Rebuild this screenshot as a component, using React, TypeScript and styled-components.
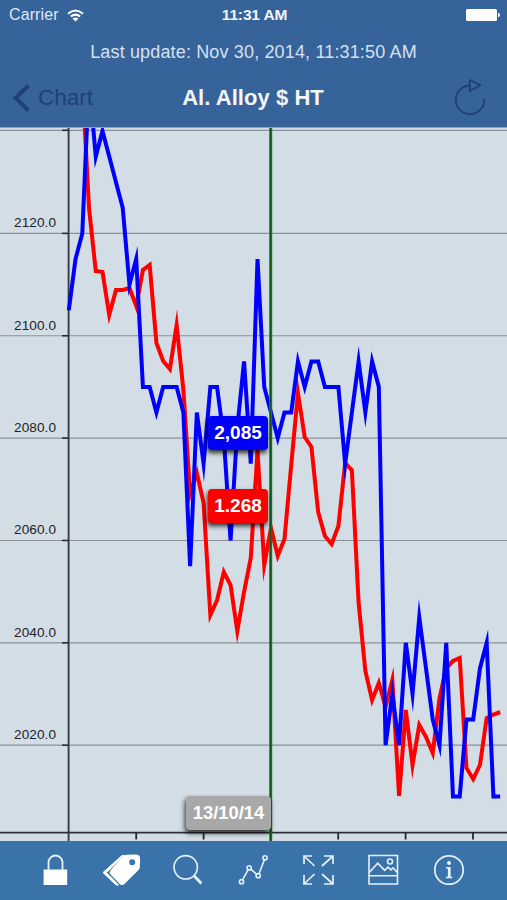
import React from "react";
import styled, { createGlobalStyle } from "styled-components";

const GlobalStyle = createGlobalStyle`
  *, *::before, *::after { box-sizing: border-box; }
  body {
    margin: 0;
    background: #d3dde6;
    font-family: "Liberation Sans", Arial, sans-serif;
  }
`;

const Screen = styled.main`
  display: flex;
  flex-direction: column;
  width: 507px;
  height: 900px;
  overflow: hidden;
`;

const Header = styled.header`
  flex: none;
  height: 128px;
  background: #37639b;
  border-bottom: 1px solid #8ca3bb;
  color: #f2f6fc;
`;

const StatusBar = styled.div`
  display: grid;
  grid-template-columns: 1fr auto 1fr;
  align-items: center;
  height: 30px;
  padding: 0 7px 0 9px;
`;

const Carrier = styled.div`
  display: flex;
  align-items: center;
  gap: 8px;
  font-size: 16px;
  letter-spacing: 0.1px;
  color: #dfe8f5;
`;

const Clock = styled.div`
  font-size: 15.5px;
  font-weight: bold;
  letter-spacing: -0.15px;
`;

const Battery = styled.svg`
  justify-self: end;
  display: block;
`;

const UpdateLine = styled.div`
  height: 44px;
  line-height: 45px;
  text-align: center;
  font-size: 18px;
  letter-spacing: 0.15px;
  color: #d5e1f1;
`;

const NavBar = styled.nav`
  display: grid;
  grid-template-columns: 1fr auto 1fr;
  align-items: center;
  height: 48px;
  padding: 0 21px 0 12px;
`;

const NavButton = styled.button<{ $end?: boolean }>`
  display: flex;
  align-items: center;
  gap: 8px;
  justify-self: ${(p) => (p.$end ? "end" : "start")};
  padding: 0;
  border: 0;
  background: none;
  color: #1f3f7d;
  font: 22.5px "Liberation Sans", Arial, sans-serif;
`;

const RefreshGlyph = styled.svg`
  display: block;
  margin-bottom: 3px;
`;

const Title = styled.h1`
  margin: 0;
  padding-left: 8px;
  font-size: 22px;
  letter-spacing: 0.05px;
  font-weight: bold;
`;

const ChartArea = styled.section`
  position: relative;
  flex: 1;
  overflow: hidden;
  background: #d3dde6;
`;

const Plot = styled.svg`
  display: block;
`;

const AxisLabel = styled.text`
  font: 13.6px "Liberation Sans", Arial, sans-serif;
  fill: #1d2228;
`;

const Badge = styled.div<{ $top: number; $color: string; $wide?: boolean }>`
  position: absolute;
  top: ${(p) => p.$top}px;
  right: ${(p) => (p.$wide ? 236 : 239)}px;
  display: flex;
  align-items: center;
  justify-content: center;
  width: ${(p) => (p.$wide ? 85 : 60)}px;
  height: 34px;
  border-radius: 4px;
  background: ${(p) => p.$color};
  box-shadow: -1px 3px 5px rgba(0, 0, 0, 0.8);
  color: #fff;
  font-size: ${(p) => (p.$wide ? 18.4 : 19)}px;
  font-weight: bold;
`;

const Toolbar = styled.footer`
  flex: none;
  display: grid;
  grid-template-columns: repeat(7, 65.6px);
  justify-content: center;
  align-items: center;
  height: 59px;
  padding: 0 3px 1px 0;
  background: #3a73aa;
`;

const Tool = styled.button`
  display: grid;
  place-items: center;
  padding: 0;
  border: 0;
  background: none;
  color: #e6f1fc;
`;

const CHART_TOP = 128;
const CHART_HEIGHT = 713;
const START_X = 68.8;
const STEP_X = 6.74;
const priceToY = (price: number) => 233.4 + (2120 - price) * 5.118;

const prices = [
  2105, 2115, 2120, 2150, 2135, 2140, 2135, 2130, 2125, 2110, 2115, 2090, 2090,
  2085, 2090, 2090, 2090, 2085, 2055, 2085, 2075, 2090, 2090, 2080, 2060, 2082,
  2095, 2075, 2115, 2090, 2085, 2080, 2085, 2085, 2095, 2090, 2095, 2095, 2090,
  2090, 2090, 2075, 2085, 2095, 2085, 2095, 2090, 2020, 2030, 2020, 2040, 2030,
  2045, 2035, 2025, 2020, 2040, 2010, 2010, 2025, 2025, 2035, 2040, 2010, 2010,
];

const rates = [
  20, 40, 80, 208, 271, 272, 315, 290, 290, 288, 306, 270, 265, 343, 361, 369,
  325, 390, 494, 473, 503, 615, 600, 572, 585, 631, 592, 558, 450, 565, 528,
  556, 539, 465, 393, 437, 447, 512, 536, 544, 526, 463, 470, 603, 671, 700,
  683, 707, 680, 796, 710, 765, 725, 737, 753, 698, 668, 661, 658, 768, 779,
  765, 718, 714.5, 712,
];

const toPoints = (ys: number[]) =>
  ys.map((y, i) => `${(START_X + i * STEP_X).toFixed(2)},${y.toFixed(1)}`).join(" ");

const gridPrices = [2140, 2120, 2100, 2080, 2060, 2040, 2020];
const dateTicks = [136.2, 203.6, 338.2, 405.6, 473];

function PriceChart() {
  return (
    <ChartArea>
      <Plot width="507" height={CHART_HEIGHT} viewBox={`0 ${CHART_TOP} 507 ${CHART_HEIGHT}`}>
        {gridPrices.map((price, i) => {
          const y = i === 0 ? 130.3 : priceToY(price);
          return (
            <g key={price}>
              <line x1="0" x2="507" y1={y} y2={y} stroke="#8b9299" strokeWidth="1.2" />
              <line x1="62" x2="69" y1={y} y2={y} stroke="#20272e" strokeWidth="1.5" />
              {i > 0 && (
                <AxisLabel x="14" y={y - 6.2} textLength="42">
                  {price.toFixed(1)}
                </AxisLabel>
              )}
            </g>
          );
        })}
        <path d="M68.6 128V841" stroke="#343c44" strokeWidth="1.9" />
        <path d="M0 832.6H507" stroke="#2a3036" strokeWidth="1.8" />
        {dateTicks.map((x) => (
          <path key={x} d={`M${x} 832V839.5`} stroke="#20272e" strokeWidth="1.8" />
        ))}
        <g fill="none" strokeWidth="4" strokeMiterlimit="10">
          <polyline points={toPoints(rates)} stroke="#ff0000" />
          <polyline points={toPoints(prices.map(priceToY))} stroke="#0000ff" />
        </g>
        <path d="M270.7 128V841" stroke="#1a7d22" strokeWidth="3" />
        <path d="M270.7 128V841" stroke="#0b4f14" strokeWidth="1" />
      </Plot>
      <Badge $top={288} $color="#0000fa">2,085</Badge>
      <Badge $top={361} $color="#fc0000">1.268</Badge>
      <Badge $top={668} $color="#a8a8a8" $wide>13/10/14</Badge>
    </ChartArea>
  );
}

const LockIcon = () => (
  <svg width="32" height="34" viewBox="0 0 32 34" fill="none">
    <path d="M9.5 17V9.5a7 7 0 0 1 14 0V17" stroke="currentColor" strokeWidth="1.8" />
    <path d="M4.6 16.5h23.6V32H4.6z" fill="#fff" />
  </svg>
);

const TagsIcon = () => (
  <svg width="40" height="34" viewBox="0 0 40 34">
    <path d="M21 2.5h2.2L5.3 19.6 17.5 32h-2.4L2 19.6z" fill="#fff" stroke="#fff" strokeWidth="1" strokeLinejoin="round" />
    <path
      fillRule="evenodd"
      d="M25.5 1.8 35 1.6q3.9 0 4.1 3.7l-.3 8.6q0 2-1.5 3.4L23.1 31.2q-2 1.8-4 0l-9.8-10q-1.8-2 0-3.8L22 3.4q1.4-1.5 3.5-1.6zM31.2 6.2a3 3 0 1 0 0 6 3 3 0 1 0 0-6z"
      fill="#fff"
    />
  </svg>
);

const SearchIcon = () => (
  <svg width="32" height="34" viewBox="-2 0 32 34" fill="none" stroke="currentColor">
    <circle cx="13.7" cy="14.3" r="11.7" strokeWidth="1.6" />
    <path d="m22.2 23 7.2 7.5" strokeWidth="2.8" />
  </svg>
);

const LineChartIcon = () => (
  <svg width="32" height="34" viewBox="-2 0 32 34" fill="none" stroke="currentColor" strokeWidth="1.6">
    <circle cx="3.5" cy="28.7" r="2.1" />
    <circle cx="11.2" cy="14.8" r="2.1" />
    <circle cx="20.2" cy="22.7" r="2.1" />
    <circle cx="27" cy="4.8" r="2.1" />
    <path d="m4.5 26.8 5.7-10.1m2.6-.5 5.8 5.1m2.4-.6 5.4-13.9" />
  </svg>
);

const ExpandIcon = () => (
  <svg width="32" height="34" viewBox="0 0 32 34" fill="none" stroke="currentColor" strokeWidth="1.7">
    <path d="M2 11V3h8M2 3l10.5 10M22 3h9v8M31 3 20 13M2 22v9h8M2 31l10.5-10M31 22v9h-9m9 0L20 21" />
  </svg>
);

const PictureIcon = () => (
  <svg width="32" height="34" viewBox="0 0 32 34" fill="none" stroke="currentColor" strokeWidth="1.6">
    <path d="M2 2.5h28.5V31H2zM2 22.8h28.5M2.5 19.2l8.2-9 7 7.2 3.3-3.2 3 2.6 2-2 4 4.5" />
    <circle cx="23" cy="8.5" r="2.5" />
  </svg>
);

const InfoIcon = () => (
  <svg width="32" height="34" viewBox="0 0 32 34" fill="none" stroke="currentColor">
    <circle cx="16" cy="17" r="14.2" strokeWidth="1.7" />
    <circle cx="16" cy="10" r="2" fill="currentColor" stroke="none" />
    <path d="M13 14.7h3.5v9.7M13 24.4h6.3" strokeWidth="1.5" />
    <path d="M16.2 14.5v10" strokeWidth="2.6" />
  </svg>
);

const tools = [
  { name: "Lock", Icon: LockIcon },
  { name: "Tags", Icon: TagsIcon },
  { name: "Search", Icon: SearchIcon },
  { name: "Series", Icon: LineChartIcon },
  { name: "Full screen", Icon: ExpandIcon },
  { name: "Picture", Icon: PictureIcon },
  { name: "Info", Icon: InfoIcon },
];

export default function App() {
  return (
    <Screen>
      <GlobalStyle />
      <Header>
        <StatusBar>
          <Carrier>
            Carrier
            <svg width="17" height="13" viewBox="0 0 17 13" fill="none" stroke="#fff" strokeWidth="2">
              <path d="M1 4.7q7.5-6.5 15 0M3.8 7.6q4.7-4 9.4 0" />
              <path d="m5.5 9.6 3 3 3-3q-3-2.4-6 0z" fill="#fff" stroke="none" />
            </svg>
          </Carrier>
          <Clock>11:31 AM</Clock>
          <Battery width="34" height="14" viewBox="0 0 34 14" fill="#fff">
            <rect x="0" y="1" width="31" height="12" rx="1.5" />
            <path d="M32 4.7q2 .3 2 2.3t-2 2.3z" />
          </Battery>
        </StatusBar>
        <UpdateLine>Last update: Nov 30, 2014, 11:31:50 AM</UpdateLine>
        <NavBar>
          <NavButton>
            <svg width="18" height="28" viewBox="0 0 18 28" fill="none" stroke="currentColor" strokeWidth="4">
              <path d="M16.5 1.5 3.5 14l13 12.5" />
            </svg>
            Chart
          </NavButton>
          <Title>Al. Alloy $ HT</Title>
          <NavButton $end aria-label="Refresh">
            <RefreshGlyph width="33" height="38" viewBox="0 0 33 38" fill="none" stroke="currentColor" strokeWidth="1.9">
              <path d="M16.5 7.5A14.3 14.3 0 1 0 31.4 21M16.8 2v11l10.5-5.8z" strokeLinejoin="round" />
            </RefreshGlyph>
          </NavButton>
        </NavBar>
      </Header>
      <PriceChart />
      <Toolbar>
        {tools.map(({ name, Icon }) => (
          <Tool key={name} aria-label={name}>
            <Icon />
          </Tool>
        ))}
      </Toolbar>
    </Screen>
  );
}
